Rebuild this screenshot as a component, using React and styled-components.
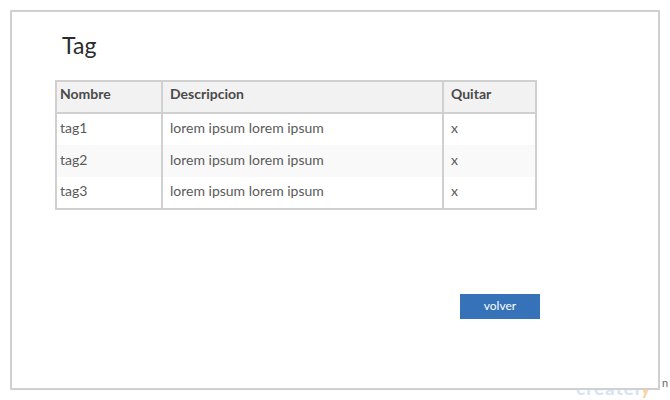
import React from 'react';
import styled, { createGlobalStyle } from 'styled-components';

const GlobalStyle = createGlobalStyle`
  html, body {
    margin: 0;
    padding: 0;
    background: #ffffff;
    font-family: Lato, "Open Sans", "Liberation Sans", sans-serif;
  }
`;

const Page = styled.div`
  position: relative;
  width: 670px;
  height: 400px;
  overflow: hidden;
  padding: 10px;
  box-sizing: border-box;
`;

const Frame = styled.div`
  position: relative;
  z-index: 1;
  width: 650px;
  height: 380px;
  box-sizing: border-box;
  border: 2px solid #d0d0d0;
  background: #ffffff;
  padding: 19px 0 0 43px;
  display: flex;
  flex-direction: column;
`;

const Title = styled.h1`
  margin: 0 0 21px 7px;
  font-size: 23px;
  font-weight: 400;
  color: #2b2b2b;
  line-height: 28px;
`;

const Table = styled.table`
  width: 482px;
  table-layout: fixed;
  border-collapse: collapse;
  border: 2px solid #d0d0d0;
  font-size: 14px;
  color: #5a5a5a;
`;

const HeadCell = styled.th`
  box-sizing: border-box;
  height: 32px;
  width: ${(p) => (p.$w ? `${p.$w}px` : 'auto')};
  padding: 0 0 7px ${(p) => (p.$first ? 3 : 7)}px;
  text-align: left;
  font-weight: 700;
  color: #4a4a4a;
  background: #f2f2f2;
  border-bottom: 2px solid #d0d0d0;
  border-right: ${(p) => (p.$last ? 'none' : '2px solid #d0d0d0')};
`;

const Row = styled.tr`
  background: ${(p) => (p.$striped ? '#f9f9f9' : '#ffffff')};
`;

const Cell = styled.td`
  box-sizing: border-box;
  height: 32px;
  padding: 0 0 4px ${(p) => (p.$first ? 3 : 7)}px;
  border-right: ${(p) => (p.$last ? 'none' : '2px solid #d0d0d0')};
`;

const Footer = styled.div`
  display: flex;
  justify-content: flex-end;
  width: 485px;
  margin-top: 84px;
`;

const Button = styled.button`
  width: 80px;
  height: 25px;
  border: none;
  background: #3572b7;
  color: #ffffff;
  font-family: inherit;
  font-size: 12px;
  padding: 0 0 3px;
  cursor: pointer;
`;

const Watermark = styled.span`
  position: absolute;
  left: 576px;
  top: 376px;
  z-index: 0;
  font-size: 19px;
  font-weight: 700;
  color: #d4e4f6;
  letter-spacing: 1px;
`;

const WatermarkAccent = styled.span`
  color: #fbd3a0;
`;

const WatermarkTail = styled.span`
  position: absolute;
  left: 662px;
  top: 376px;
  font-size: 11px;
  color: #666666;
`;

const tags = [
  { name: 'tag1', desc: 'lorem ipsum lorem ipsum' },
  { name: 'tag2', desc: 'lorem ipsum lorem ipsum' },
  { name: 'tag3', desc: 'lorem ipsum lorem ipsum' },
];

export default function App() {
  return (
    <>
      <GlobalStyle />
      <Page>
        <Watermark>
          createl<WatermarkAccent>y</WatermarkAccent>
        </Watermark>
        <WatermarkTail>n</WatermarkTail>
        <Frame>
          <Title>Tag</Title>
          <Table>
            <thead>
              <tr>
                <HeadCell $first $w={106}>Nombre</HeadCell>
                <HeadCell $w={281}>Descripcion</HeadCell>
                <HeadCell $last>Quitar</HeadCell>
              </tr>
            </thead>
            <tbody>
              {tags.map((t, i) => (
                <Row key={t.name} $striped={i === 1}>
                  <Cell $first>{t.name}</Cell>
                  <Cell>{t.desc}</Cell>
                  <Cell $last>x</Cell>
                </Row>
              ))}
            </tbody>
          </Table>
          <Footer>
            <Button>volver</Button>
          </Footer>
        </Frame>
      </Page>
    </>
  );
}
